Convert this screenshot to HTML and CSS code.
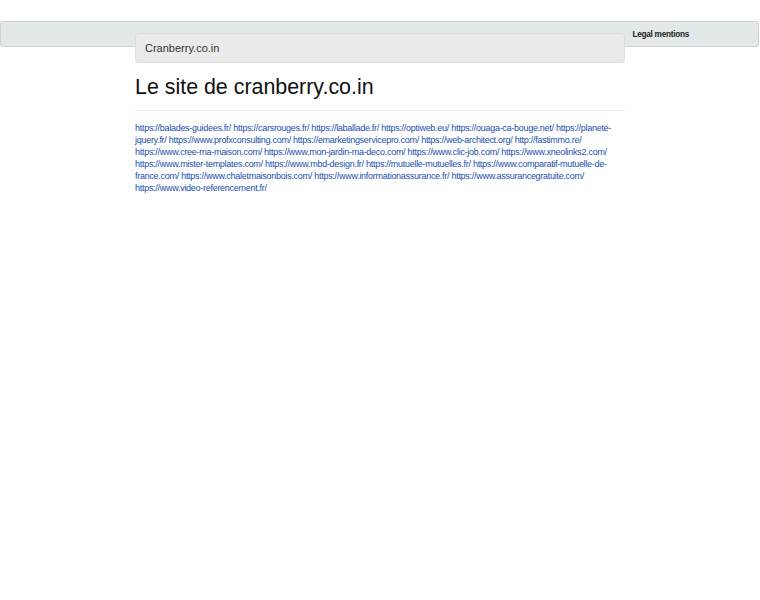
FILE: index.html
```html
<!DOCTYPE html>
<html lang="fr">
<head>
<meta charset="utf-8">
<title>Cranberry.co.in</title>
<link rel="stylesheet" href="styles.css">
</head>
<body>
<nav class="navbar">
  <a class="nav-link" href="#">Legal mentions</a>
</nav>
<main class="container">
  <div class="well">Cranberry.co.in</div>
  <h1 class="title">Le site de cranberry.co.in</h1>
  <hr class="rule">
  <p class="links">
    <a href="#">https://balades-guidees.fr/</a> <a href="#">https://carsrouges.fr/</a> <a href="#">https://laballade.fr/</a> <a href="#">https://optiweb.eu/</a> <a href="#">https://ouaga-ca-bouge.net/</a> <a href="#">https://planete-<wbr>jquery.fr/</a> <a href="#">https://www.profxconsulting.com/</a> <a href="#">https://emarketingservicepro.com/</a> <a href="#">https://web-architect.org/</a> <a href="#">http://fastimmo.re/</a> <a href="#">https://www.cree-ma-maison.com/</a> <a href="#">https://www.mon-jardin-ma-deco.com/</a> <a href="#">https://www.clic-job.com/</a> <a href="#">https://www.xneolinks2.com/</a> <a href="#">https://www.mister-templates.com/</a> <a href="#">https://www.mbd-design.fr/</a> <a href="#">https://mutuelle-mutuelles.fr/</a> <a href="#">https://www.comparatif-mutuelle-de-<wbr>france.com/</a> <a href="#">https://www.chaletmaisonbois.com/</a> <a href="#">https://www.informationassurance.fr/</a> <a href="#">https://www.assurancegratuite.com/</a> <a href="#">https://www.video-referencement.fr/</a>
  </p>
</main>
</body>
</html>
```
FILE: styles.css
```css
html, body {
  margin: 0;
  padding: 0;
  background: #fefefe;
  font-family: "Liberation Sans", Arial, Helvetica, sans-serif;
  color: #333;
}

.navbar {
  position: absolute;
  top: 21px;
  left: 0;
  right: 1px;
  height: 26px;
  box-sizing: border-box;
  background: #e3e8e8;
  border: 1px solid #cdd2d2;
  border-radius: 3px;
  z-index: 0;
  display: flex;
  justify-content: flex-end;
  align-items: center;
  padding-right: 69px;
}

.nav-link {
  font-size: 8.2px;
  font-weight: bold;
  color: #222;
  text-decoration: none;
  letter-spacing: -0.25px;
}

.container {
  position: relative;
  z-index: 1;
  width: 490px;
  margin: 0 auto;
  padding-top: 33px;
}

.well {
  background: #ebebeb;
  border: 1px solid #dedede;
  border-radius: 4px;
  height: 28px;
  line-height: 28px;
  padding: 0 9px;
  font-size: 11px;
  color: #333;
}

.title {
  margin: 12px 0 0;
  font-size: 21.4px;
  font-weight: normal;
  line-height: 24px;
  color: #111;
}

.rule {
  margin: 11px 0 0;
  border: 0;
  border-top: 1px solid #eeeeee;
  height: 0;
}

.links {
  margin: 11px 0 0;
  font-size: 9px;
  line-height: 12px;
  letter-spacing: -0.28px;
}

.links a {
  color: #1b50b0;
  text-decoration: none;
}
```
